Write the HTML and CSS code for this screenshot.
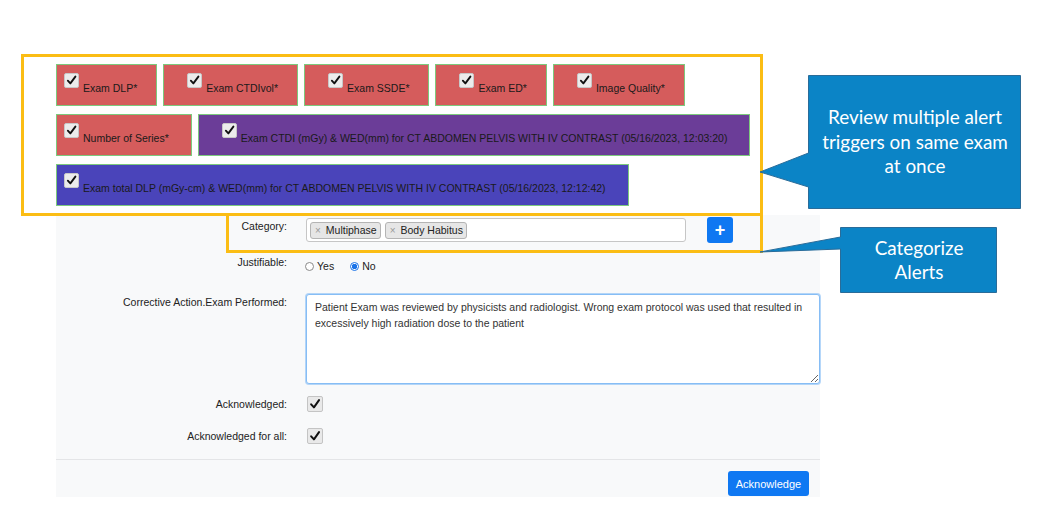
FILE: index.html
```html
<!DOCTYPE html>
<html>
<head>
<meta charset="utf-8">
<link rel="stylesheet" href="styles.css">
</head>
<body>
<div class="page">
  <div class="content">
    <div class="alerts">
      <div class="tag red first"><span class="cb"><svg viewBox="0 0 16 16"><path d="M3.5 8.2 L6.6 11.6 L12.8 3.2" /></svg></span><span class="tl">Exam DLP*</span></div>
      <div class="tag red"><span class="cb"><svg viewBox="0 0 16 16"><path d="M3.5 8.2 L6.6 11.6 L12.8 3.2" /></svg></span><span class="tl">Exam CTDIvol*</span></div>
      <div class="tag red"><span class="cb"><svg viewBox="0 0 16 16"><path d="M3.5 8.2 L6.6 11.6 L12.8 3.2" /></svg></span><span class="tl">Exam SSDE*</span></div>
      <div class="tag red"><span class="cb"><svg viewBox="0 0 16 16"><path d="M3.5 8.2 L6.6 11.6 L12.8 3.2" /></svg></span><span class="tl">Exam ED*</span></div>
      <div class="tag red"><span class="cb"><svg viewBox="0 0 16 16"><path d="M3.5 8.2 L6.6 11.6 L12.8 3.2" /></svg></span><span class="tl">Image Quality*</span></div>
      <div class="tag red first wide"><span class="cb"><svg viewBox="0 0 16 16"><path d="M3.5 8.2 L6.6 11.6 L12.8 3.2" /></svg></span><span class="tl">Number of Series*</span></div>
      <div class="tag purple wide"><span class="cb"><svg viewBox="0 0 16 16"><path d="M3.5 8.2 L6.6 11.6 L12.8 3.2" /></svg></span><span class="tl">Exam CTDI (mGy) &amp; WED(mm) for CT ABDOMEN PELVIS WITH IV CONTRAST (05/16/2023, 12:03:20)</span></div>
      <div class="tag blue first wide"><span class="cb"><svg viewBox="0 0 16 16"><path d="M3.5 8.2 L6.6 11.6 L12.8 3.2" /></svg></span><span class="tl">Exam total DLP (mGy-cm) &amp; WED(mm) for CT ABDOMEN PELVIS WITH IV CONTRAST (05/16/2023, 12:12:42)</span></div>
    </div>

    <div class="panel">
      <div class="row row-cat">
        <div class="lbl">Category:</div>
        <div class="ctl cat-ctl">
          <div class="select">
            <span class="chip"><span class="x">×</span>Multiphase</span>
            <span class="chip"><span class="x">×</span>Body Habitus</span>
          </div>
          <button class="plus">+</button>
        </div>
      </div>
      <div class="row row-just">
        <div class="lbl">Justifiable:</div>
        <div class="ctl radios">
          <span class="radio"><span class="dot"></span>Yes</span>
          <span class="radio on"><span class="dot"></span>No</span>
        </div>
      </div>
      <div class="row row-corr">
        <div class="lbl">Corrective Action.Exam Performed:</div>
        <div class="ctl"><textarea class="ta">Patient Exam was reviewed by physicists and radiologist. Wrong exam protocol was used that resulted in excessively high radiation dose to the patient</textarea></div>
      </div>
      <div class="row row-ack">
        <div class="lbl">Acknowledged:</div>
        <div class="ctl"><span class="fcb"><svg viewBox="0 0 16 16"><path d="M3.6 8.4 L6.8 11.8 L12.6 3.6" /></svg></span></div>
      </div>
      <div class="row row-ack2">
        <div class="lbl">Acknowledged for all:</div>
        <div class="ctl"><span class="fcb"><svg viewBox="0 0 16 16"><path d="M3.6 8.4 L6.8 11.8 L12.6 3.6" /></svg></span></div>
      </div>
      <div class="footer">
        <button class="btn">Acknowledge</button>
      </div>
    </div>
  </div>

  <div class="hl hl1"></div>
  <div class="hl hl2"></div>

  <svg class="callouts" width="1037" height="528" viewBox="0 0 1037 528">
    <path class="cshape" d="M808.5 75.5 H1020.5 V208.5 H808.5 V187 L760 172 L808.5 153 Z" />
    <path class="cshape" d="M840.5 227.5 H996.5 V292.5 H840.5 V249 L760 252 L840.5 237 Z" />
  </svg>
  <div class="ctext ct1">Review multiple alert<br>triggers on same exam<br>at once</div>
  <div class="ctext ct2">Categorize<br>Alerts</div>
</div>
</body>
</html>
```

FILE: styles.css
```css
* { box-sizing: border-box; }
html, body { margin: 0; padding: 0; background: #ffffff; }
body {
  font-family: "Liberation Sans", Arial, Helvetica, sans-serif;
  color: #212529;
  width: 1037px;
  height: 528px;
  overflow: hidden;
}
.page { position: relative; width: 1037px; height: 528px; padding-top: 64px; }
.content { margin-left: 56px; width: 764px; }

/* alert tags */
.alerts { display: flex; flex-wrap: wrap; gap: 8px 6px; width: 764px; }
.tag {
  height: 42px;
  display: flex;
  align-items: center;
  padding: 0 19px 0 23px;
  border: 1px solid #7dc97d;
  font-size: 10.5px;
  color: #1a1a1a;
}
.tag.first { padding-left: 7px; }
.tag.wide { padding-right: 22px; }
.tag.red { background: #d55c5c; }
.tag.purple { background: #6b3d98; }
.tag.blue { background: #4a44ba; }
.tag .cb {
  width: 15px; height: 15px;
  background: #ececec;
  border: 1px solid #c8c8c8;
  border-radius: 2px;
  margin-top: -9px;
  margin-right: 4px;
  display: inline-block;
  flex: none;
}
.tag .tl { margin-top: 6px; white-space: nowrap; }
.cb svg, .fcb svg { display: block; width: 100%; height: 100%; }
.cb path, .fcb path { fill: none; stroke: #111; stroke-width: 2.3; stroke-linecap: round; stroke-linejoin: round; }

/* panel */
.panel {
  margin-top: 9px;
  background: #f8f9fa;
  padding-top: 2px;
  padding-bottom: 1px;
  font-size: 10.5px;
}
.row { display: grid; grid-template-columns: 231px 514px; column-gap: 19px; }
.lbl { text-align: right; line-height: 16px; color: #222; white-space: nowrap; }
.row-cat .lbl { padding-top: 1px; }
.cat-ctl { display: flex; align-items: center; }
.select {
  width: 380px; height: 24px;
  background: #fff;
  border: 1px solid #c6c6c6;
  border-radius: 3px;
  display: flex; align-items: center; gap: 4px;
  padding-left: 3px;
}
.chip {
  height: 17px;
  display: inline-flex; align-items: center;
  background: #e6e6e6;
  border: 1px solid #b4b4b4;
  border-radius: 3px;
  padding: 0 3px 0 4px;
  color: #222;
  font-size: 10.5px;
}
.chip .x { color: #999; font-size: 10px; margin-right: 5px; }
.plus {
  margin-left: 21px;
  width: 26px; height: 26px;
  border: none; border-radius: 3px;
  background: #0f78f2;
  color: #fff;
  font-family: "Liberation Sans", Arial, sans-serif;
  font-size: 18px; font-weight: bold;
  line-height: 26px;
  padding: 0;
}
.row-just { margin-top: 11px; height: 20px; }
.radios { display: flex; gap: 17px; padding-top: 4px; line-height: 16px; }
.radio { display: inline-flex; align-items: center; color: #222; }
.radio .dot {
  width: 9px; height: 9px; border-radius: 50%;
  border: 1px solid #8a8a8a; background: #fff;
  margin-right: 3px; margin-left: -1px;
}
.radio.on .dot { border-color: #1a73e8; background: radial-gradient(circle, #1a73e8 0 2.5px, #fff 3px); }
.row-corr { margin-top: 20px; }
.ta {
  display: block;
  width: 514px; height: 90px;
  border: 1px solid #86bdf5;
  box-shadow: 0 0 0 1px rgba(134, 189, 245, 0.6);
  border-radius: 3px;
  padding: 4px 8px;
  font-family: "Liberation Sans", Arial, sans-serif;
  font-size: 10.5px;
  line-height: 16px;
  color: #333;
  background: #fff;
  resize: vertical;
  outline: none;
}
.row-ack { margin-top: 12px; }
.row-ack2 { margin-top: 16px; }
.fcb {
  display: block;
  width: 16px; height: 16px;
  margin-left: 1px;
  background: #e9e9e9;
  border: 1px solid #c4c4c4;
  border-radius: 2px;
}
.footer {
  margin-top: 15px;
  border-top: 1px solid #e4e5e7;
  padding: 11px 11px 0 0;
  display: flex; justify-content: flex-end;
}
.btn {
  width: 81px; height: 25px;
  border: none; border-radius: 3px;
  background: #0f78f2;
  color: #fff;
  font-family: "Liberation Sans", Arial, sans-serif;
  font-size: 11px;
  padding: 0;
}

/* overlays */
.hl { position: absolute; border: 3px solid #fbbd14; }
.hl1 { left: 21px; top: 54px; width: 742px; height: 162px; }
.hl2 { left: 226px; top: 213px; width: 537px; height: 40px; }
.callouts { position: absolute; left: 0; top: 0; }
.cshape { fill: #0b84c6; stroke: #2a6c99; stroke-width: 1; }
.ctext {
  position: absolute;
  color: #fff;
  text-align: center;
  font-family: Lato, "Open Sans", sans-serif;
  font-size: 18.9px;
  line-height: 24.5px;
  white-space: nowrap;
  display: flex; align-items: center; justify-content: center;
}
.ct1 { left: 809px; top: 75px; width: 212px; height: 134px; }
.ct2 { left: 841px; top: 227px; width: 156px; height: 66px; }
```
